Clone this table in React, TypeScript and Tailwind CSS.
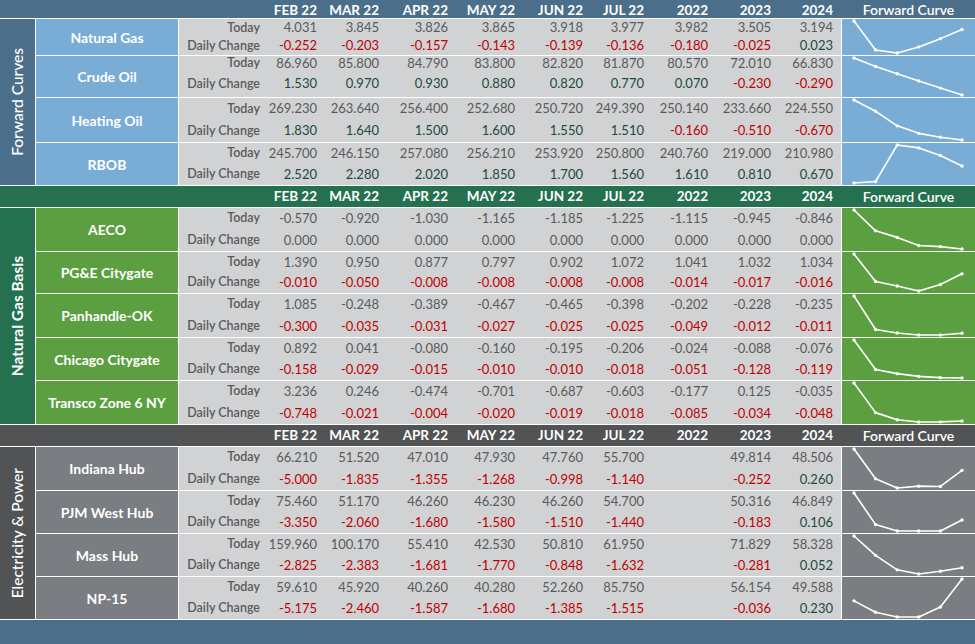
import React from "react";

type Row = {
  name: string;
  h: number;
  today: (number | null)[];
  change: (number | null)[];
  tight?: boolean;
};

type Section = {
  title: string;
  bold?: boolean;
  headBg: string;
  cellBg: string;
  headH: number;
  rows: Row[];
};

const cols = ["FEB 22", "MAR 22", "APR 22", "MAY 22", "JUN 22", "JUL 22", "2022", "2023", "2024"];

const sections: Section[] = [
  {
    title: "Forward Curves",
    headBg: "bg-[#4b6f8a]",
    cellBg: "bg-[#7aadd6]",
    headH: 18,
    rows: [
      { name: "Natural Gas", h: 36, today: [4.031, 3.845, 3.826, 3.865, 3.918, 3.977, 3.982, 3.505, 3.194], change: [-0.252, -0.203, -0.157, -0.143, -0.139, -0.136, -0.18, -0.025, 0.023] },
      { name: "Crude Oil", h: 41, tight: true, today: [86.96, 85.8, 84.79, 83.8, 82.82, 81.87, 80.57, 72.01, 66.83], change: [1.53, 0.97, 0.93, 0.88, 0.82, 0.77, 0.07, -0.23, -0.29] },
      { name: "Heating Oil", h: 44, today: [269.23, 263.64, 256.4, 252.68, 250.72, 249.39, 250.14, 233.66, 224.55], change: [1.83, 1.64, 1.5, 1.6, 1.55, 1.51, -0.16, -0.51, -0.67] },
      { name: "RBOB", h: 42, today: [245.7, 246.15, 257.08, 256.21, 253.92, 250.8, 240.76, 219.0, 210.98], change: [2.52, 2.28, 2.02, 1.85, 1.7, 1.56, 1.61, 0.81, 0.67] },
    ],
  },
  {
    title: "Natural Gas Basis",
    bold: true,
    headBg: "bg-[#25704f]",
    cellBg: "bg-[#5c9f41]",
    headH: 21,
    rows: [
      { name: "AECO", h: 43, today: [-0.57, -0.92, -1.03, -1.165, -1.185, -1.225, -1.115, -0.945, -0.846], change: [0, 0, 0, 0, 0, 0, 0, 0, 0] },
      { name: "PG&E Citygate", h: 41, today: [1.39, 0.95, 0.877, 0.797, 0.902, 1.072, 1.041, 1.032, 1.034], change: [-0.01, -0.05, -0.008, -0.008, -0.008, -0.008, -0.014, -0.017, -0.016] },
      { name: "Panhandle-OK", h: 43, today: [1.085, -0.248, -0.389, -0.467, -0.465, -0.398, -0.202, -0.228, -0.235], change: [-0.3, -0.035, -0.031, -0.027, -0.025, -0.025, -0.049, -0.012, -0.011] },
      { name: "Chicago Citygate", h: 42, today: [0.892, 0.041, -0.08, -0.16, -0.195, -0.206, -0.024, -0.088, -0.076], change: [-0.158, -0.029, -0.015, -0.01, -0.01, -0.018, -0.051, -0.128, -0.119] },
      { name: "Transco Zone 6 NY", h: 43, today: [3.236, 0.246, -0.474, -0.701, -0.687, -0.603, -0.177, 0.125, -0.035], change: [-0.748, -0.021, -0.004, -0.02, -0.019, -0.018, -0.085, -0.034, -0.048] },
    ],
  },
  {
    title: "Electricity & Power",
    headBg: "bg-[#515355]",
    cellBg: "bg-[#7a7d81]",
    headH: 21,
    rows: [
      { name: "Indiana Hub", h: 43, today: [66.21, 51.52, 47.01, 47.93, 47.76, 55.7, null, 49.814, 48.506], change: [-5.0, -1.835, -1.355, -1.268, -0.998, -1.14, null, -0.252, 0.26] },
      { name: "PJM West Hub", h: 42, today: [75.46, 51.17, 46.26, 46.23, 46.26, 54.7, null, 50.316, 46.849], change: [-3.35, -2.06, -1.68, -1.58, -1.51, -1.44, null, -0.183, 0.106] },
      { name: "Mass Hub", h: 42, today: [159.96, 100.17, 55.41, 42.53, 50.81, 61.95, null, 71.829, 58.328], change: [-2.825, -2.383, -1.681, -1.77, -0.848, -1.632, null, -0.281, 0.052] },
      { name: "NP-15", h: 42, today: [59.61, 45.92, 40.26, 40.28, 52.26, 85.75, null, 56.154, 49.588], change: [-5.175, -2.46, -1.587, -1.68, -1.385, -1.515, null, -0.036, 0.23] },
    ],
  },
];

const gridCols = "grid grid-cols-[81px_57px_62px_69px_67px_68px_61px_64px_63px_62px] pr-[8px]";

function fmt(v: number) {
  return v.toFixed(3);
}

function changeColor(v: number) {
  if (v < 0) return "text-[#c00000]";
  if (v > 0) return "text-[#1d4a3c]";
  return "text-[#5a5a5a]";
}

function Spark({ values, h }: { values: number[]; h: number }) {
  const max = Math.max(...values);
  const min = Math.min(...values);
  const pad = 2;
  const pts = values.map((v, i) => {
    const x = 12 + i * 21.6;
    const y = pad + ((max - v) / (max - min || 1)) * (h - pad * 2);
    return [x, y];
  });
  return (
    <svg width={133} height={h} className="block">
      <polyline
        points={pts.map((p) => p.join(",")).join(" ")}
        fill="none"
        stroke="#fff"
        strokeWidth={1.6}
        strokeLinejoin="round"
      />
      {pts.map((p, i) => (
        <circle key={i} cx={p[0]} cy={p[1]} r={1.7} fill="#fff" />
      ))}
    </svg>
  );
}

function DataRow({ row, cellBg }: { row: Row; cellBg: string }) {
  return (
    <div className="flex gap-px" style={{ height: row.h }}>
      <div className={`w-[142px] flex items-center justify-center text-white font-bold text-[14px] ${cellBg}`}>
        {row.name}
      </div>
      <div className={`w-[662px] bg-[#d0d2d4] text-[13px] ${gridCols} ${row.tight ? "grid-rows-[15px_1fr]" : "grid-rows-2"}`}>
        <div className="flex items-center justify-end text-[#5a5a5a] font-semibold text-[12.5px]">Today</div>
        {row.today.map((v, i) => (
          <div key={"t" + i} className="flex items-center justify-end text-[#5a5a5a]">
            {v === null ? "" : fmt(v)}
          </div>
        ))}
        <div className="flex items-center justify-end text-[#5a5a5a] font-semibold text-[12.5px]">Daily Change</div>
        {row.change.map((v, i) => (
          <div key={"c" + i} className={`flex items-center justify-end ${v === null ? "" : changeColor(v)}`}>
            {v === null ? "" : fmt(v)}
          </div>
        ))}
      </div>
      <div className={`w-[133px] ${cellBg}`}>
        <Spark values={row.today.slice(0, 6) as number[]} h={row.h} />
      </div>
    </div>
  );
}

function SectionBlock({ s }: { s: Section }) {
  return (
    <div className="flex flex-col gap-px">
      <div className={`flex text-white font-bold text-[13.5px] ${s.headBg}`} style={{ height: s.headH }}>
        <div className="w-[179px]" />
        <div className={`w-[662px] ${gridCols}`}>
          <div />
          {cols.map((c) => (
            <div key={c} className="flex items-center justify-end">
              {c}
            </div>
          ))}
        </div>
        <div className="w-px" />
        <div className="w-[133px] flex items-center justify-center font-semibold text-[14px]">Forward Curve</div>
      </div>
      <div className="flex gap-px">
        <div className={`w-[35px] flex items-center justify-center ${s.headBg}`}>
          <span
            className={`[writing-mode:vertical-rl] rotate-180 text-white text-[15.5px] whitespace-nowrap ${s.bold ? "font-bold" : "font-medium"}`}
          >
            {s.title}
          </span>
        </div>
        <div className="flex flex-col gap-px">
          {s.rows.map((r) => (
            <DataRow key={r.name} row={r} cellBg={s.cellBg} />
          ))}
        </div>
      </div>
    </div>
  );
}

export default function App() {
  return (
    <div
      className="w-[975px] h-[644px] bg-white flex flex-col gap-px overflow-hidden"
      style={{ fontFamily: "Lato, 'Open Sans', sans-serif" }}
    >
      {sections.map((s) => (
        <SectionBlock key={s.title} s={s} />
      ))}
      <div className="flex-1 bg-[#4b6f8a]" />
    </div>
  );
}
